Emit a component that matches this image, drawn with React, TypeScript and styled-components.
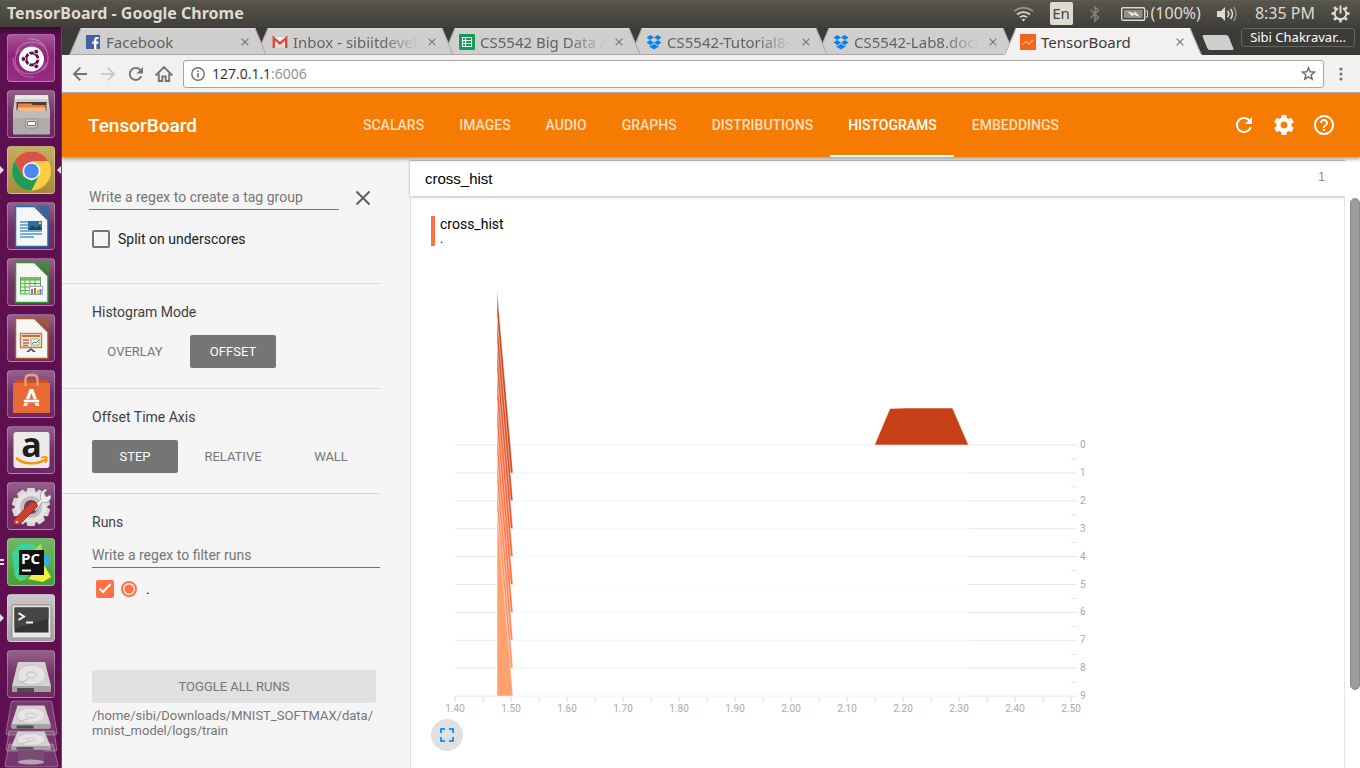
import React from "react";
import styled, { createGlobalStyle, css } from "styled-components";

const GlobalStyle = createGlobalStyle`
  *, *::before, *::after { box-sizing: border-box; }
  html, body { margin: 0; padding: 0; }
  body { font-family: Roboto, sans-serif; font-size: 14px; background: #3c3b37; }
  button { font: inherit; color: inherit; border: 0; padding: 0; background: none; cursor: pointer; }
  svg { display: block; flex: none; }
`;

const systemFont = `"Noto Sans", "Open Sans", sans-serif`;

const Desktop = styled.div`
  display: flex;
  flex-direction: column;
  min-height: 100vh;
`;

const SystemBar = styled.header`
  display: flex;
  align-items: center;
  justify-content: space-between;
  height: 27px;
  padding: 0 10px 0 7px;
  background: linear-gradient(#5f5d50 0, #56544b 2px, #403f3a 100%);
  color: #dfdbd2;
  font: 16px/27px ${systemFont};
`;

const WindowTitle = styled.div`
  font-weight: 700;
`;

const Indicators = styled.div`
  display: flex;
  align-items: center;
  gap: 16px;
`;

const Indicator = styled.div<{ $spaced?: boolean }>`
  display: flex;
  align-items: center;
  gap: 3px;
  padding-right: ${(p) => (p.$spaced ? "4px" : 0)};
`;

const LanguageBadge = styled.div`
  width: 23px;
  height: 23px;
  border-radius: 2px;
  background: #dfdbd2;
  color: #45443f;
  font-size: 15px;
  line-height: 23px;
  text-align: center;
`;

const Workspace = styled.div`
  display: flex;
  flex: 1;
`;

/* ---------- launcher ---------- */

const Launcher = styled.nav`
  display: flex;
  flex-direction: column;
  flex: none;
  width: 62px;
  padding-top: 7px;
  background: linear-gradient(#3a0a31 0, #5d0f4f 8px, #5f1051 100%);
  border-right: 1px solid #7d3a70;
`;

const LauncherList = styled.div`
  display: flex;
  flex-direction: column;
  gap: 8px;
`;

const LauncherItem = styled.div`
  display: grid;
  grid-template-columns: 7px 48px 6px;
  align-items: center;
`;

const Tile = styled.button<{ $fill?: string }>`
  display: grid;
  place-items: center;
  width: 48px;
  height: 48px;
  border-radius: 4px;
  border: 1px solid rgba(255, 255, 255, 0.28);
  background: ${(p) =>
    p.$fill ?? "linear-gradient(rgba(255,255,255,.34), rgba(255,255,255,.14) 50%, rgba(255,255,255,.1))"};
  svg { overflow: visible; }
`;

const Pip = styled.svg<{ $end?: boolean }>`
  justify-self: ${(p) => (p.$end ? "end" : "start")};
`;

/* ---------- browser chrome ---------- */

const Browser = styled.div`
  display: flex;
  flex-direction: column;
  flex: 1;
  min-width: 0;
`;

const TabStrip = styled.div`
  display: flex;
  height: 28px;
  padding-left: 7px;
  padding-right: 5px;
  background: #3c3b37;
  font: 15px/26px ${systemFont};
`;

const tabFace = css<{ $active?: boolean }>`
  content: "";
  position: absolute;
  z-index: -1;
  top: 1px;
  bottom: 0;
  width: 55%;
  background: ${(p) => (p.$active ? "#f2f1f0" : "#d0cfce")};
  border-top: 1px solid ${(p) => (p.$active ? "#fff" : "#dddcdb")};
  border-bottom: 1px solid ${(p) => (p.$active ? "#f2f1f0" : "#a9a8a7")};
`;

const TabShape = styled.div<{ $active?: boolean; $order: number }>`
  position: relative;
  isolation: isolate;
  z-index: ${(p) => (p.$active ? 20 : p.$order)};
  display: flex;
  align-items: center;
  width: 198px;
  margin-right: -11px;
  padding: 2px 18px 0 16px;
  color: ${(p) => (p.$active ? "#3c3b37" : "#64625f")};
  &::before {
    ${tabFace}
    left: 6px;
    transform: skewX(-23deg);
    border-left: 1px solid #a9a8a7;
  }
  &::after {
    ${tabFace}
    right: 6px;
    transform: skewX(23deg);
    border-right: 1px solid #a9a8a7;
  }
`;

const TabLink = styled.button<{ $fade: boolean }>`
  display: flex;
  align-items: center;
  gap: 5px;
  flex: 1;
  min-width: 0;
  overflow: hidden;
  line-height: 24px;
  white-space: nowrap;
  text-align: left;
  ${(p) => p.$fade && "mask-image: linear-gradient(90deg, #000 75%, transparent 100%);"}
`;

const TabClose = styled.button`
  margin-left: 9px;
  color: #7c7b79;
`;

const NewTab = styled.button`
  width: 26px;
  height: 15px;
  margin: 8px 8px 0 14px;
  border-radius: 2px;
  background: #d0cfce;
  transform: skewX(22deg);
`;

const Profile = styled.button`
  height: 19px;
  width: 114px;
  margin: 1px 0 0 auto;
  border: 1px solid #66655f;
  border-radius: 3px;
  color: #fff;
  font-size: 13px;
  line-height: 17px;
`;

const Toolbar = styled.div`
  display: flex;
  align-items: center;
  height: 38px;
  padding-left: 9px;
  background: #f2f1f0;
  border-bottom: 1px solid #b2b4b9;
  color: #747371;
`;

const ToolButton = styled.button<{ $dim?: boolean }>`
  display: grid;
  place-items: center;
  width: 28px;
  height: 28px;
  margin: 0 5px 0 -5px;
  opacity: ${(p) => (p.$dim ? 0.3 : 1)};
`;

const Omnibox = styled.div`
  display: flex;
  align-items: center;
  gap: 7px;
  flex: 1;
  height: 28px;
  padding: 0 7px;
  margin-right: 8px;
  background: #fff;
  border: 1px solid #a5a4a3;
  border-radius: 3px;
  color: #6e6d6b;
`;

const Address = styled.div`
  flex: 1;
  color: #8f8e8c;
  font: 14px/26px "Open Sans", sans-serif;
  span { color: #2d2c2b; }
`;

/* ---------- TensorBoard ---------- */

const AppBar = styled.header`
  position: relative;
  z-index: 2;
  display: flex;
  align-items: center;
  height: 64px;
  padding: 0 16px 0 26px;
  background: #f57c00;
  color: #fff;
  box-shadow: 0 2px 4px rgba(0, 0, 0, 0.4);
`;

const Brand = styled.h1`
  width: 257px;
  margin: 0;
  font-size: 19px;
  font-weight: 500;
`;

const Dashboards = styled.nav`
  display: flex;
  flex: 1;
  align-self: stretch;
`;

const DashboardLink = styled.a<{ $active?: boolean }>`
  padding: 0 17px 0 18px;
  border-bottom: 2px solid ${(p) => (p.$active ? "#fff" : "transparent")};
  color: ${(p) => (p.$active ? "#fff" : "rgba(255,255,255,.76)")};
  font-weight: 500;
  line-height: 64px;
  height: 64px;
  text-decoration: none;
`;

const BarButton = styled.button`
  display: grid;
  place-items: center;
  width: 40px;
  height: 40px;
`;

const Page = styled.div`
  display: flex;
  flex: 1;
  background: #f5f5f5;
`;

const Sidebar = styled.aside`
  flex: none;
  width: 348px;
  padding-right: 30px;
`;

const Section = styled.section`
  padding: 20px 0 20px 30px;
  border-bottom: 1px solid #d8d8d8;
  &:last-child { border: 0; }
`;

const TagSection = styled(Section)`
  height: 127px;
  padding-left: 27px;
`;

const TagRow = styled.div`
  display: flex;
  align-items: flex-start;
  justify-content: space-between;
  padding: 8px 7px 0 0;
`;

const SectionTitle = styled.h2`
  margin: 0 0 15px;
  color: #3f3f3f;
  font-size: 14px;
  font-weight: 400;
  line-height: 16px;
`;

const TextField = styled.input<{ $short?: boolean }>`
  display: block;
  width: ${(p) => (p.$short ? "250px" : "100%")};
  height: ${(p) => (p.$short ? "25px" : "23px")};
  padding: 0 0 ${(p) => (p.$short ? "1px" : "3px")};
  border: 0;
  border-bottom: 1px solid #737373;
  background: none;
  font: 14px Roboto, sans-serif;
  outline: 0;
  &::placeholder { color: #757575; opacity: 1; }
`;

const ClearButton = styled.button`
  width: 20px;
  height: 20px;
  margin-top: 3px;
  color: #5a5a5a;
`;

const CheckLabel = styled.label`
  display: flex;
  align-items: center;
  gap: 8px;
  margin: 20px 0 0 3px;
  color: #212121;
`;

const CheckBox = styled.input.attrs({ type: "checkbox" })`
  appearance: none;
  position: relative;
  width: 18px;
  height: 18px;
  margin: 0;
  border: 2px solid #757575;
  border-radius: 2px;
  &:checked { background: #ff7043; border-color: #ff7043; }
  &:checked::after {
    content: "";
    position: absolute;
    left: 4px;
    top: -1px;
    width: 6px;
    height: 12px;
    border: solid #fff;
    border-width: 0 2px 2px 0;
    transform: rotate(43deg);
  }
`;

const RadioButton = styled.input.attrs({ type: "radio" })`
  appearance: none;
  width: 16px;
  height: 16px;
  margin: 0;
  border: 2px solid #ff7043;
  border-radius: 50%;
  background: radial-gradient(circle, #ff7043 0 4px, transparent 5px);
`;

const ModeRow = styled.div`
  display: flex;
  gap: 12px;
`;

const ModeButton = styled.button<{ $selected?: boolean }>`
  width: 86px;
  height: 33px;
  border-radius: 2px;
  background: ${(p) => (p.$selected ? "#757575" : "transparent")};
  color: ${(p) => (p.$selected ? "#fff" : "#757575")};
  font-size: 13px;
`;

const RunRow = styled.div`
  display: flex;
  align-items: center;
  gap: 7px;
  height: 42px;
  padding-left: 4px;
  margin-bottom: 60px;
  label { padding-left: 2px; line-height: 14px; }
`;

const ToggleRuns = styled.button`
  width: calc(100% - 4px);
  height: 33px;
  border-radius: 3px;
  background: #e0e0e0;
  color: #757575;
  font-size: 13px;
`;

const LogPath = styled.p`
  margin: 5px 0 0;
  color: #757575;
  font-size: 13px;
  line-height: 15px;
`;

const Content = styled.main`
  display: flex;
  flex-direction: column;
  flex: 1;
  min-width: 0;
  background: #fff;
`;

const CategoryBar = styled.div`
  display: flex;
  align-items: center;
  justify-content: space-between;
  height: 36px;
  margin-top: 3px;
  padding: 0 20px 0 15px;
  border-top: 1px solid #c0c0c0;
  box-shadow: 0 1px 3px rgba(0, 0, 0, 0.3);
  font: 15px "Liberation Sans", sans-serif;
`;

const CategoryCount = styled.span`
  color: #8a8a8a;
  font-size: 12px;
  line-height: 16px;
  padding-bottom: 4px;
`;

const Pane = styled.div`
  flex: 1;
  padding: 20px 20px 0;
  border-left: 1px solid #dedede;
  border-right: 1px solid #e4e4e4;
`;

const CardHeading = styled.div`
  height: 30px;
  padding-left: 5px;
  border-left: 4px solid #ff7043;
  line-height: 16px;
`;

const RunName = styled.div`
  font-size: 12px;
  line-height: 14px;
`;

const ExpandButton = styled.button`
  display: grid;
  place-items: center;
  width: 32px;
  height: 32px;
  margin-top: 3px;
  border-radius: 50%;
  background: #e0e0e0;
`;

const ScrollTrack = styled.div`
  flex: none;
  width: 15px;
  padding: 41px 0 0 5px;
  background: #fff;
`;

const ScrollThumb = styled.div`
  height: 492px;
  border: 1px solid #8a8a8a;
  border-radius: 5px;
  background: #9d9c9b;
`;

/* ---------- histogram ---------- */

const LEFT = 24;
const RIGHT = 640;
const BASE = 199;
const STEP = 27.9;
const ramp = ["#c73f17", "#cd4a20", "#d3552a", "#e45f36", "#f4693d", "#ff7043", "#ff7c4e", "#ff8859", "#ff9565", "#ffa270"];

const Histogram = () => {
  const rows = ramp.map((color, i) => ({ color, y: BASE + i * STEP, step: i }));
  const ticks = Array.from({ length: 23 }, (_, i) => LEFT + i * 28);
  return (
    <svg width="680" height="470" role="img" aria-label="cross_hist histogram" fontFamily="Roboto, sans-serif" fontSize="10" fill="#aaa">
      {ticks.map((x, i) => (
        <g key={x}>
          <line x1={x} x2={x} y1="450" y2="456" stroke="#e6e6e6" strokeWidth="1.4" />
          {i % 2 === 0 && (
            <text x={x} y="466" textAnchor="middle">{(1.4 + i * 0.05).toFixed(2)}</text>
          )}
        </g>
      ))}
      {rows.map(({ y, step }) => (
        <g key={step}>
          <line x1={LEFT} x2={RIGHT + 6} y1={y} y2={y} stroke="#e8e8e8" />
          {step < 9 && <line x1={RIGHT} x2={RIGHT + 6} y1={y + STEP / 2} y2={y + STEP / 2} stroke="#e2e2e2" />}
          <text x="649" y={y + 3}>{step}</text>
        </g>
      ))}
      {rows.map(({ y, color, step }) => (
        <path
          key={step}
          fill={color}
          stroke="#fff"
          strokeOpacity=".5"
          d={
            step === 0
              ? `M66 ${y}H443.5L459 ${y - 36.5}L475 ${y - 37}H521.5L537.5 ${y}Z`
              : `M66 ${y}V${y - 184}L82 ${y}H537.5Z`
          }
        />
      ))}
    </svg>
  );
};

/* ---------- icons ---------- */

const Close = ({ size = 8, stroke = 1.3 }) => (
  <svg width={size} height={size} viewBox="0 0 8 8" fill="none" stroke="currentColor" strokeWidth={stroke}>
    <path d="M.6 .6 7.4 7.4M7.4 .6 .6 7.4" />
  </svg>
);

const FacebookIcon = () => (
  <svg width="16" height="16" viewBox="0 0 16 16">
    <path d="M1 1h14v14H1z" fill="#4460a0" />
    <path d="M9 15V9.800H7.200V7.600H9V6.200C9 4 10.300 3 12 3h1.600v2.100h-1.100c-.9 0-1.100.4-1.100 1.100v1.400h2.200l-.3 2.200h-1.900V15z" fill="#fff" />
  </svg>
);
const GmailIcon = () => (
  <svg width="16" height="16" viewBox="0 0 16 16">
    <path d="M1 3h14v11H1z" fill="#f3f1f0" />
    <path d="M1 14 6 9l2 1.500L10 9l5 5z" fill="#dcdad9" />
    <path d="M1.800 14V4L8 9.300 14.200 4v10" fill="none" stroke="#d54b3d" strokeWidth="2.400" />
  </svg>
);
const SheetsIcon = () => (
  <svg width="16" height="16" viewBox="0 0 16 16">
    <rect width="16" height="16" rx="1" fill="#109d58" />
    <path d="M3.500 3.500h9v9h-9zM3.500 6.500h9M3.500 9.500h9M6.500 3.500v9" fill="none" stroke="#fff" strokeWidth="1.100" />
  </svg>
);
const DropboxIcon = () => (
  <svg width="16" height="16" viewBox="0 0 16 16" fill="#0a7fee">
    <path d="M4.600 1 8 3.500 4 6 .5 3.500zM11.400 1 8 3.500 12 6l3.500-2.500zM.5 8.500 4 6l4 2.500-3.400 2.700zM15.500 8.500 12 6 8 8.500l3.400 2.700zM8 9.800l3 2.300 1.500-.8v1.500L8 15.500l-4.500-2.700v-1.500l1.500.8z" />
  </svg>
);
const TensorIcon = () => (
  <svg width="16" height="16" viewBox="0 0 16 16">
    <path d="M0 0h16v16H0z" fill="#f26426" />
    <path d="m2.500 10.500 3.500-3 3 2.500 4-4" fill="none" stroke="#ffb52e" strokeWidth="1.500" />
  </svg>
);

const WifiIcon = () => (
  <svg width="21" height="16" viewBox="0 0 21 16" fill="none" stroke="#dfdbd2" strokeWidth="1.700">
    <path d="M1 5.500a14 14 0 0 1 19 0" opacity=".5" />
    <path d="M4 8.500a10 10 0 0 1 13 0M7 11.300a5.500 5.500 0 0 1 7 0" />
    <path d="m8.500 13 2 2.500 2-2.500z" fill="#dfdbd2" stroke="none" />
  </svg>
);
const BluetoothIcon = () => (
  <svg width="12" height="18" viewBox="0 0 12 18" fill="none" stroke="#85837a" strokeWidth="1.500">
    <path d="m1.500 5 8 7.500L6 16V2l3.500 3.500-8 7.500" />
  </svg>
);
const BatteryIcon = () => (
  <svg width="27" height="16" viewBox="0 0 27 16">
    <rect x=".7" y="1.700" width="23" height="12.600" rx="1.500" fill="none" stroke="#dfdbd2" strokeWidth="1.400" />
    <path d="M3 4h18.500v8H3z" fill="#918e85" />
    <path d="M25 5h1.500v6H25" fill="none" stroke="#dfdbd2" />
    <path d="m6 5 7 2.500 1-2L19 11l-6.500-2.500-1 2z" fill="#f1eee7" />
  </svg>
);
const VolumeIcon = () => (
  <svg width="22" height="18" viewBox="0 0 22 18" fill="none" stroke="#dfdbd2" strokeWidth="1.600">
    <path d="M0 6h4l4-4v14l-4-4H0z" fill="#dfdbd2" stroke="none" />
    <path d="M10.500 6a4.500 4.500 0 0 1 0 6M13.500 4a7.500 7.500 0 0 1 0 10" />
    <path d="M16.500 2a11 11 0 0 1 0 14" opacity=".45" />
  </svg>
);
const SessionIcon = () => (
  <svg width="19" height="19" viewBox="-9.500 -9.500 19 19" fill="none" stroke="#dfdbd2">
    <path d="M-2.500-5.200a5.800 5.800 0 1 0 5 0" strokeWidth="2" />
    <path d="M0-8v8" strokeWidth="2" />
    {[45, 90, 135, 180, 225, 270, 315].map((a) => (
      <path key={a} d="M0-6v-3" strokeWidth="2.600" transform={`rotate(${a})`} />
    ))}
  </svg>
);

const BackIcon = ({ flip = false }) => (
  <svg width="16" height="16" viewBox="0 0 16 16" fill="none" stroke="currentColor" strokeWidth="1.900">
    <path d="M15 8H2.500M8.300 1.600 2 8l6.300 6.400" transform={flip ? "matrix(-1 0 0 1 16 0)" : undefined} />
  </svg>
);
const ReloadIcon = () => (
  <svg width="16" height="16" viewBox="0 0 16 16">
    <path d="M13.300 10.200A6 6 0 1 1 12.300 4" fill="none" stroke="currentColor" strokeWidth="1.900" />
    <path d="M15 1v6.500H8.500z" fill="currentColor" />
  </svg>
);
const HomeIcon = () => (
  <svg width="18" height="18" viewBox="0 0 18 18" fill="none" stroke="currentColor" strokeWidth="1.800">
    <path d="M1.500 9.500 9 2l7.500 7.500h-2.300V16H10.700v-4.500H7.300V16H3.800V9.500z" />
  </svg>
);
const InfoIcon = () => (
  <svg width="14" height="14" viewBox="0 0 14 14" fill="none" stroke="currentColor" strokeWidth="1.400">
    <circle cx="7" cy="7" r="6.200" />
    <path d="M7 6.200v4M7 3.500v1.500" strokeWidth="1.600" />
  </svg>
);
const StarIcon = () => (
  <svg width="15" height="15" viewBox="0 0 16 16" fill="none" stroke="currentColor" strokeWidth="1.500">
    <path d="m8 1.800 1.800 4.300 4.700.4-3.600 3 1.100 4.600-4-2.500-4 2.500 1.100-4.600-3.600-3 4.700-.4z" />
  </svg>
);
const MenuIcon = () => (
  <svg width="4" height="14" viewBox="0 0 4 14" fill="currentColor">
    <circle cx="2" cy="2" r="1.600" /><circle cx="2" cy="7" r="1.600" /><circle cx="2" cy="12" r="1.600" />
  </svg>
);

const barIcons: [string, string][] = [
  ["Reload", "M17.650 6.350C16.200 4.900 14.210 4 12 4c-4.420 0-7.990 3.580-7.990 8s3.570 8 7.990 8c3.730 0 6.840-2.550 7.730-6h-2.080c-.82 2.330-3.040 4-5.650 4-3.310 0-6-2.690-6-6s2.690-6 6-6c1.660 0 3.140.69 4.220 1.780L13 11h7V4l-2.350 2.350z"],
  ["Settings", "M19.430 12.980c.04-.32.07-.64.07-.98s-.03-.66-.07-.98l2.110-1.650c.19-.15.24-.42.12-.64l-2-3.460c-.12-.22-.39-.3-.61-.22l-2.490 1c-.52-.4-1.080-.73-1.690-.98l-.38-2.650C14.460 2.180 14.250 2 14 2h-4c-.25 0-.46.18-.49.42l-.38 2.650c-.61.25-1.170.59-1.690.98l-2.490-1c-.23-.09-.49 0-.61.22l-2 3.460c-.13.22-.07.49.12.64l2.110 1.650c-.04.32-.07.65-.07.98s.03.66.07.98l-2.110 1.650c-.19.15-.24.42-.12.64l2 3.460c.12.22.39.3.61.22l2.490-1c.52.4 1.080.73 1.690.98l.38 2.650c.03.24.24.42.49.42h4c.25 0 .46-.18.49-.42l.38-2.650c.61-.25 1.170-.59 1.690-.98l2.490 1c.23.09.49 0 .61-.22l2-3.460c.12-.22.07-.49-.12-.64l-2.110-1.650zM12 15.500c-1.930 0-3.500-1.570-3.500-3.500s1.570-3.500 3.500-3.500 3.500 1.570 3.500 3.500-1.570 3.500-3.500 3.500z"],
  ["Help", "M11 18h2v-2h-2v2zm1-16C6.480 2 2 6.480 2 12s4.480 10 10 10 10-4.480 10-10S17.520 2 12 2zm0 18c-4.410 0-8-3.590-8-8s3.590-8 8-8 8 3.590 8 8-3.590 8-8 8zm0-14c-2.210 0-4 1.790-4 4h2c0-1.100.9-2 2-2s2 .9 2 2c0 2-3 1.750-3 5h2c0-2.250 3-2.500 3-5 0-2.210-1.790-4-4-4z"],
];

/* ---------- launcher artwork ---------- */

const Art = ({ children }: { children: React.ReactNode }) => (
  <svg width="46" height="46" viewBox="0 0 46 46">{children}</svg>
);

const DashArt = () => (
  <Art>
    <g fill="none" stroke="#d9a6cd" strokeWidth="1.200" opacity=".5">
      <path d="M8 19C10 8 24 4 34 10 42 16 42 29 35 35M38 28C35 38 22 42 12 36 5 30 6 20 12 14M20 4c12-1 20 8 20 20M26 42C14 43 5 35 5 23" />
    </g>
    <circle cx="23.500" cy="24" r="12.500" fill="#fff" />
    <circle cx="24" cy="24" r="6" fill="none" stroke="#5c1250" strokeWidth="2.800" />
    {[90, 210, 330].map((a) => (
      <path key={a} d="M24 14v6" stroke="#fff" strokeWidth="1.300" transform={`rotate(${a} 24 24)`} />
    ))}
    <g fill="#5c1250" stroke="#fff" strokeWidth=".8">
      <circle cx="15.500" cy="24" r="2.400" /><circle cx="28.300" cy="16.600" r="2.400" /><circle cx="28.300" cy="31.400" r="2.400" />
    </g>
  </Art>
);

const FilesArt = () => (
  <Art>
    <path d="M7 5q0-1 1-1h31q1 0 1 1l2 16H5z" fill="#cfcecb" />
    <path d="M7 5q0-1 1-1h31q1 0 1 1l.3 3H6.700z" fill="#e9e8e6" />
    <path d="M8.500 11h30v9h-30z" fill="#4d3a30" />
    <path d="M10 12.500h13l2 1.500h12.500v6H10z" fill="#e58244" />
    <path d="M9.500 16.500h28V20h-28z" fill="#f4b98a" />
    <path d="M5 19.500h9l2 1h26v22q0 1-1 1H6q-1 0-1-1z" fill="#aeadab" />
    <path d="M5 19.500h9l2 1h26V27H5z" fill="#bdbcba" />
    <rect x="17.500" y="28" width="12" height="9" rx="2" fill="#cecdcb" stroke="#8b8987" />
    <path d="M19.500 30.500h8v4h-8z" fill="#fff" stroke="#716f6d" />
  </Art>
);

const ChromeArt = () => (
  <Art>
    <circle cx="23.500" cy="24" r="19.500" fill="#fccf43" />
    <path d="M6.600 14.300A19.500 19.500 0 0 1 40.400 14.300H23.500L15 28.900z" fill="#d85546" />
    <path d="M6.600 14.300 15 28.900 23.500 33.700 31 29 23.500 43.500A19.500 19.500 0 0 1 6.600 14.300" fill="#229b5a" />
    <path d="M40.400 14.300 23.500 14.800 32 29" fill="#fccf43" />
    <circle cx="23.500" cy="24" r="9" fill="#f3f3f3" />
    <circle cx="23.500" cy="24" r="7.300" fill="#4a87ee" />
  </Art>
);

const DocumentArt = ({ color, children }: { color: string; children: React.ReactNode }) => (
  <Art>
    <path d="M7.500 3.500h19L40 17v26.500H7.500z" fill="#f6f6f6" stroke={color} strokeWidth="1.500" />
    <path d="M29 2.500h12v12z" fill={color} opacity=".8" />
    {children}
  </Art>
);
const WriterArt = () => (
  <DocumentArt color="#1e6fa5">
    <path d="M12 19h8M12 22h8M12 25h8M12 28h22M12 31h22M12 34h14" stroke="#4a9ac8" strokeWidth="1.300" />
    <path d="M20 18h14v9H20z" fill="#2a6fb0" /><path d="m20 27 4-5 4 3 3-3 3 5z" fill="#234b3b" /><circle cx="32" cy="20" r="1.200" fill="#ffd42a" />
  </DocumentArt>
);
const CalcArt = () => (
  <DocumentArt color="#2f9a2c">
    <path d="M12 18h21v17H12z" fill="#e5f6df" /><path d="M12 18h21v3H12z" fill="#7ac36a" />
    <path d="M12.500 18v17M17 18v17M22 18v17M27 18v17M32.500 18v17M12 21h21M12 24.500h21M12 28h21M12 31.500h21M12 35h21" stroke="#57b14a" />
    <path d="M21.500 27.500h13v8h-13z" fill="#fff" stroke="#9aa" /><path d="M24 30v5M32.500 30v5" stroke="#3b8fd0" strokeWidth="2" /><path d="M27 29v6" stroke="#e06030" strokeWidth="2" /><path d="M30 31v4" stroke="#f0b030" strokeWidth="2" />
  </DocumentArt>
);
const ImpressArt = () => (
  <DocumentArt color="#a35b2a">
    <path d="M12.500 18.500h21v14h-21z" fill="#fbe7da" stroke="#c57c50" strokeWidth="1.400" />
    <path d="M14 21h18" stroke="#d66a35" strokeWidth="2" /><path d="M15 25h6M15 28h6M15 30.500h5" stroke="#b86a42" strokeWidth="1.300" />
    <path d="M23 24h8v6h-8z" fill="#fff" stroke="#8a8" /><path d="m24 29 2-2 2 1 3-3" stroke="#3d9b3d" fill="none" />
    <path d="m23 33-5 4h3l2-2 2 2h3z" fill="#555" />
  </DocumentArt>
);
const SoftwareArt = () => (
  <Art>
    <path d="M7 9h33v6H7z" fill="#c7522c" /><path d="m5 12h37v29q0 1-1 1H6q-1 0-1-1z" fill="#ea6a35" />
    <path d="M17.500 15V9q0-5 4-5h4q4 0 4 5v6" fill="none" stroke="#efa079" strokeWidth="2.300" />
    <text x="23.500" y="35" textAnchor="middle" fontFamily="Lato, sans-serif" fontWeight="900" fontSize="22" fill="#fff">A</text>
    <path d="M15.500 28.500h16v3h-16z" fill="#fff" stroke="#ea6a35" strokeWidth=".6" />
  </Art>
);
const AmazonArt = () => (
  <Art>
    <rect x="5.500" y="5" width="36" height="36" rx="3" fill="#ecebea" />
    <text x="23.500" y="30" textAnchor="middle" fontFamily="Open Sans, sans-serif" fontWeight="700" fontSize="34" fill="#1e1e1e">a</text>
    <path d="M8 31c8 7 22 7 30 1" fill="none" stroke="#f79400" strokeWidth="2.400" />
    <path d="M33 31c3-1.500 6-1.500 6 0s-1 4-2 5" fill="none" stroke="#f79400" strokeWidth="1.700" />
  </Art>
);
const SettingsArt = () => (
  <Art>
    {[0, 36, 72, 108, 144].map((a) => (
      <path key={a} d="M19.500 5h7l1.500 5v28l-1.500 5h-7L18 38V10z" fill="#dad9d7" transform={`rotate(${a} 23 24)`} />
    ))}
    <circle cx="23" cy="24" r="15.500" fill="#e5e4e2" /><circle cx="23" cy="24" r="11" fill="#c1bfbd" /><circle cx="23" cy="24" r="7" fill="#74405f" />
    <path d="m24 25 9-9c-2-4 1-9 5-10l1 1-3 3 2 4 4-2 1 1c0 5-5 8-9 6l-6 9z" fill="#efefed" stroke="#979593" strokeWidth=".8" />
    <path d="M6 41q-2-2 0-4l17-18q3-1 5 1t1 4L12 41q-3 2-6 0z" fill="#cf3f30" stroke="#8f221a" strokeWidth=".8" />
    <circle cx="9" cy="39" r="1.300" fill="#f0d0ca" />
  </Art>
);
const PyCharmArt = () => (
  <Art>
    <path d="M4 14 13 4l14 2 5 14-14 20L7 38z" fill="#38d59b" /><path d="m25 13 8-9 2 14z" fill="#a8e14f" />
    <path d="m34 14 9 6-5 9z" fill="#25b5ee" /><path d="m35 24 8 14-8 5-15-3z" fill="#f6ee3e" /><path d="m7 38 12 2-7 2z" fill="#7ad060" />
    <path d="M11 11h25v25H11z" fill="#111" />
    <text x="13" y="25" fontFamily="Open Sans, sans-serif" fontWeight="700" fontSize="15" fill="#fff">PC</text>
    <path d="M14 30.500h9v2h-9z" fill="#fff" />
  </Art>
);
const TerminalArt = () => (
  <Art>
    <rect x="4" y="10" width="39" height="33" rx="1.500" fill="#e9e8e7" stroke="#8b8989" />
    <path d="M6.500 12.500h34v25h-34z" fill="#343434" /><path d="M6.500 12.500h34v11l-34 10z" fill="#454545" />
    <path d="m10.500 18 5.500 3.500-5.500 3.500" fill="none" stroke="#f2f2f2" strokeWidth="2" /><path d="M18 27.500h7" stroke="#f2f2f2" strokeWidth="2" />
  </Art>
);
const DriveShape = () => (
  <g>
    <path d="m10 11 27 0 6 24v5q0 1-1 1H5q-1 0-1-1v-5z" fill="#d3d2d0" />
    <path d="M4 35h39v5q0 1-1 1H5q-1 0-1-1z" fill="#a5a3a1" /><path d="M9 37h17v4H9z" fill="#4f4e4d" />
    <ellipse cx="23.500" cy="24" rx="14" ry="10" fill="#e6e5e3" stroke="#c8c6c4" /><ellipse cx="23.500" cy="24" rx="5" ry="3" fill="none" stroke="#c3c1bf" />
    <path d="m12 32 9-4" stroke="#c0bebc" strokeWidth="1.200" />
  </g>
);
const DriveArt = () => <Art><DriveShape /></Art>;

const FoldedTiles = () => (
  <svg width="61" height="70" viewBox="0 0 61 70">
    <g stroke="rgba(255,255,255,.3)" fill="rgba(255,255,255,.16)">
      <path d="M11 5q0-2 2-2h37q2 0 2 2l5 30q0 2-2 2H8q-2 0-2-2z" />
      <path d="M9 33h45l3 19q0 1-2 1H8q-2 0-2-1z" />
      <path d="M9 46h44l5 21q0 2-2 2H7q-2 0-2-2z" />
    </g>
    <path d="M18 47h26v18q-13 4-26 0z" fill="#7b4a72" /><ellipse cx="31" cy="64" rx="13" ry="2.500" fill="#b5a5b1" />
    <g transform="translate(7.500 27) scale(1 .6)"><DriveShape /></g>
    <g transform="translate(7.500 -1) scale(1 .77)"><DriveShape /></g>
  </svg>
);

const launcherItems: { name: string; art: React.ReactNode; fill?: string; pips?: number; focused?: boolean }[] = [
  { name: "Search your computer", art: <DashArt />, fill: "linear-gradient(#a65697, #8d2278 45%, #962d82)" },
  { name: "Files", art: <FilesArt /> },
  { name: "Google Chrome", art: <ChromeArt />, fill: "linear-gradient(#c5ad63, #a58a39)", pips: 1, focused: true },
  { name: "LibreOffice Writer", art: <WriterArt /> },
  { name: "LibreOffice Calc", art: <CalcArt /> },
  { name: "LibreOffice Impress", art: <ImpressArt /> },
  { name: "Ubuntu Software", art: <SoftwareArt /> },
  { name: "Amazon", art: <AmazonArt /> },
  { name: "System Settings", art: <SettingsArt /> },
  { name: "PyCharm", art: <PyCharmArt />, fill: "linear-gradient(#71b865, #46a03c)", pips: 2 },
  { name: "Terminal", art: <TerminalArt />, fill: "linear-gradient(#cbc6c9, #a59fa4)", pips: 1 },
  { name: "Drive", art: <DriveArt /> },
];

const tabs = [
  { title: "Facebook", icon: <FacebookIcon /> },
  { title: "Inbox - sibiitdevel", icon: <GmailIcon />, fade: true },
  { title: "CS5542 Big Data A", icon: <SheetsIcon />, fade: true },
  { title: "CS5542-Tutorial8-", icon: <DropboxIcon />, fade: true },
  { title: "CS5542-Lab8.docx", icon: <DropboxIcon />, fade: true },
  { title: "TensorBoard", icon: <TensorIcon />, active: true },
];

const dashboards = ["SCALARS", "IMAGES", "AUDIO", "GRAPHS", "DISTRIBUTIONS", "HISTOGRAMS", "EMBEDDINGS"];

export default function App() {
  return (
    <Desktop>
      <GlobalStyle />
      <SystemBar>
        <WindowTitle>TensorBoard - Google Chrome</WindowTitle>
        <Indicators>
          <WifiIcon />
          <LanguageBadge>En</LanguageBadge>
          <Indicator $spaced><BluetoothIcon /></Indicator>
          <Indicator><BatteryIcon />(100%)</Indicator>
          <VolumeIcon />
          <Indicator>8:35 PM</Indicator>
          <SessionIcon />
        </Indicators>
      </SystemBar>
      <Workspace>
        <Launcher>
          <LauncherList>
            {launcherItems.map((item) => (
              <LauncherItem key={item.name}>
                <Pip width="5" height="10" fill="#e6e1e5">
                  {item.pips === 1 && <path d="M0 1 4 5 0 9z" />}
                  {item.pips === 2 && <path d="M0 2h4v2H0zM0 6h4v2H0z" />}
                </Pip>
                <Tile $fill={item.fill} aria-label={item.name}>{item.art}</Tile>
                <Pip $end width="5" height="10" fill="#e6e1e5">
                  {item.focused && <path d="M5 1 1 5l4 4z" />}
                </Pip>
              </LauncherItem>
            ))}
          </LauncherList>
          <FoldedTiles />
        </Launcher>
        <Browser>
          <TabStrip>
            {tabs.map((tab, i) => (
              <TabShape key={tab.title} $active={tab.active} $order={10 - i}>
                <TabLink $fade={!!tab.fade}>{tab.icon}{tab.title}</TabLink>
                <TabClose aria-label={`Close ${tab.title}`}><Close /></TabClose>
              </TabShape>
            ))}
            <NewTab aria-label="New tab" />
            <Profile>Sibi Chakravar...</Profile>
          </TabStrip>
          <Toolbar>
            <ToolButton aria-label="Back"><BackIcon /></ToolButton>
            <ToolButton $dim aria-label="Forward"><BackIcon flip /></ToolButton>
            <ToolButton aria-label="Reload"><ReloadIcon /></ToolButton>
            <ToolButton aria-label="Home"><HomeIcon /></ToolButton>
            <Omnibox>
              <InfoIcon />
              <Address><span>127.0.1.1</span>:6006</Address>
              <StarIcon />
            </Omnibox>
            <ToolButton aria-label="Menu"><MenuIcon /></ToolButton>
          </Toolbar>
          <AppBar>
            <Brand>TensorBoard</Brand>
            <Dashboards>
              {dashboards.map((name) => (
                <DashboardLink key={name} href={`#${name.toLowerCase()}`} $active={name === "HISTOGRAMS"}>{name}</DashboardLink>
              ))}
            </Dashboards>
            {barIcons.map(([name, d]) => (
              <BarButton key={name} aria-label={name}>
                <svg width="24" height="24" viewBox="0 0 24 24" fill="#fff"><path d={d} /></svg>
              </BarButton>
            ))}
          </AppBar>
          <Page>
            <Sidebar>
              <TagSection>
                <TagRow>
                  <TextField $short aria-label="Tag group regex" placeholder="Write a regex to create a tag group" />
                  <ClearButton aria-label="Remove group">
                    <svg width="20" height="20" viewBox="0 0 20 20" stroke="currentColor" strokeWidth="1.800"><path d="m3.500 3.500 13 13M16.500 3.500l-13 13" /></svg>
                  </ClearButton>
                </TagRow>
                <CheckLabel><CheckBox />Split on underscores</CheckLabel>
              </TagSection>
              <Section>
                <SectionTitle>Histogram Mode</SectionTitle>
                <ModeRow>
                  <ModeButton>OVERLAY</ModeButton>
                  <ModeButton $selected>OFFSET</ModeButton>
                </ModeRow>
              </Section>
              <Section>
                <SectionTitle>Offset Time Axis</SectionTitle>
                <ModeRow>
                  <ModeButton $selected>STEP</ModeButton>
                  <ModeButton>RELATIVE</ModeButton>
                  <ModeButton>WALL</ModeButton>
                </ModeRow>
              </Section>
              <Section>
                <SectionTitle>Runs</SectionTitle>
                <TextField aria-label="Run filter regex" placeholder="Write a regex to filter runs" />
                <RunRow>
                  <CheckBox id="run-visible" defaultChecked />
                  <RadioButton name="run" aria-label="Show only this run" defaultChecked />
                  <label htmlFor="run-visible">.</label>
                </RunRow>
                <ToggleRuns>TOGGLE ALL RUNS</ToggleRuns>
                <LogPath>/home/sibi/Downloads/MNIST_SOFTMAX/data/<wbr />mnist_model/logs/train</LogPath>
              </Section>
            </Sidebar>
            <Content>
              <CategoryBar>cross_hist<CategoryCount>1</CategoryCount></CategoryBar>
              <Pane>
                <CardHeading>
                  cross_hist
                  <RunName>.</RunName>
                </CardHeading>
                <Histogram />
                <ExpandButton aria-label="Expand chart">
                  <svg width="24" height="24" viewBox="0 0 24 24" fill="#2196f3"><path d="M7 14H5v5h5v-2H7v-3zm-2-4h2V7h3V5H5v5zm12 7h-3v2h5v-5h-2v3zM14 5v2h3v3h2V5h-5z" /></svg>
                </ExpandButton>
              </Pane>
            </Content>
            <ScrollTrack><ScrollThumb /></ScrollTrack>
          </Page>
        </Browser>
      </Workspace>
    </Desktop>
  );
}
